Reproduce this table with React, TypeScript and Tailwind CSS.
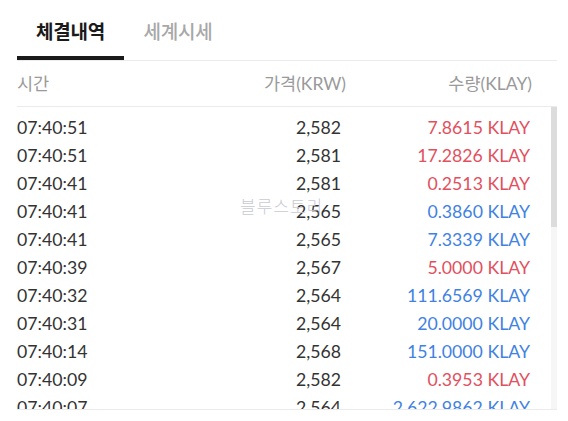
import React from 'react'

type Trade = { time: string; price: string; qty: string; side: 'buy' | 'sell' }

const TRADES: Trade[] = [
  { time: '07:40:51', price: '2,582', qty: '7.8615', side: 'buy' },
  { time: '07:40:51', price: '2,581', qty: '17.2826', side: 'buy' },
  { time: '07:40:41', price: '2,581', qty: '0.2513', side: 'buy' },
  { time: '07:40:41', price: '2,565', qty: '0.3860', side: 'sell' },
  { time: '07:40:41', price: '2,565', qty: '7.3339', side: 'sell' },
  { time: '07:40:39', price: '2,567', qty: '5.0000', side: 'buy' },
  { time: '07:40:32', price: '2,564', qty: '111.6569', side: 'sell' },
  { time: '07:40:31', price: '2,564', qty: '20.0000', side: 'sell' },
  { time: '07:40:14', price: '2,568', qty: '151.0000', side: 'sell' },
  { time: '07:40:09', price: '2,582', qty: '0.3953', side: 'buy' },
  { time: '07:40:07', price: '2,564', qty: '2,622.9862', side: 'sell' },
  { time: '07:40:02', price: '2,564', qty: '12.0000', side: 'sell' },
]

const KO = { fontFamily: '"Noto Sans CJK KR", "Noto Sans", sans-serif' }
const NUM = { fontFamily: 'Lato, "Noto Sans CJK KR", sans-serif' }

export default function App() {
  return (
    <div className="w-[568px] h-[421px] bg-white overflow-hidden">
      <div className="ml-[17px] w-[540px]">
        {/* 탭 */}
        <div className="flex items-end border-b border-[#ebebeb] h-[61px]" style={KO}>
          <div className="w-[107px] h-full flex flex-col items-center">
            <span className="flex-1 flex items-center text-[19px] font-bold text-[#1a1a1a] tracking-[-0.2px] pt-[6px]">
              체결내역
            </span>
            <div className="w-full h-[4px] bg-[#1a1a1a]" />
          </div>
          <div className="w-[108px] h-full flex items-center justify-center pt-[2px] text-[19px] font-medium text-[#a8a8a8] tracking-[-0.2px]">
            세계시세
          </div>
        </div>

        {/* 헤더 */}
        <div className="flex items-center h-[46px] border-b border-[#ebebeb] text-[17.5px] text-[#9a9a9a]" style={KO}>
          <span className="w-[200px]">시간</span>
          <span className="w-[129px] text-right">
            가격<span style={NUM}>(KRW)</span>
          </span>
          <span className="w-[186px] text-right">
            수량<span style={NUM}>(KLAY)</span>
          </span>
        </div>

        {/* 목록 */}
        <div className="relative h-[303px] overflow-hidden border-b border-[#ebebeb]">
          <div className="pt-[7px]">
            {TRADES.map((t, i) => (
              <div key={i} className="flex items-center h-[28px] text-[17.7px] text-[#333333]" style={NUM}>
                <span className="w-[200px]">{t.time}</span>
                <span className="w-[124px] text-right">{t.price}</span>
                <span
                  className={
                    'w-[189px] text-right ' + (t.side === 'buy' ? 'text-[#e2505e]' : 'text-[#3f82e3]')
                  }
                >
                  {t.qty} KLAY
                </span>
              </div>
            ))}
          </div>

          {/* 워터마크 */}
          <span
            className="absolute left-[223px] top-[86px] text-[17px] font-light text-[#c9c9d4] tracking-[1px]"
            style={KO}
          >
            블루스토리
          </span>

          {/* 스크롤바 */}
          <div className="absolute right-0 top-0 w-[6px] h-full bg-[#f6f6f6]">
            <div className="w-full h-[120px] bg-[#dcdcdc]" />
          </div>
        </div>
      </div>
    </div>
  )
}
